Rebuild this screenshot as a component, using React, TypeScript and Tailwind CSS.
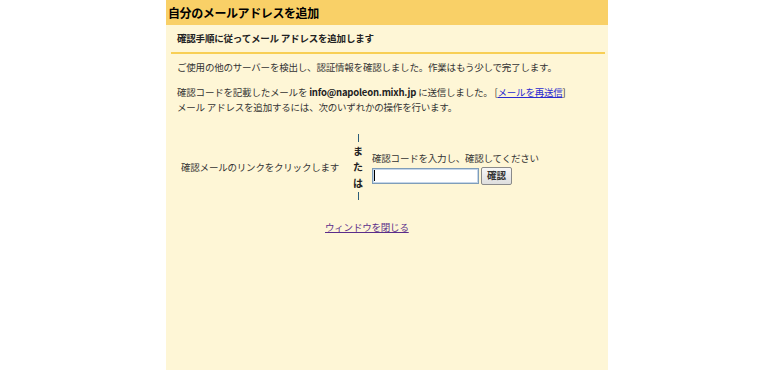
import React from "react";

export default function App() {
  const font = { fontFamily: '"Noto Sans CJK JP", "Noto Sans", sans-serif' };
  return (
    <div className="w-[774px] h-[370px] bg-white flex" style={font}>
      <div className="ml-[166px] w-[442px] h-[370px] bg-[#fef6d6] flex flex-col">
        <div className="h-[25px] bg-[#f9d067] flex items-center pl-[2px]">
          <span className="text-[12px] font-bold text-black tracking-[-0.4px]">自分のメールアドレスを追加</span>
        </div>
        <div className="h-[27px] flex items-center pl-[11px]">
          <span className="text-[9.5px] font-bold text-[#222] tracking-[-0.2px]">確認手順に従ってメール アドレスを追加します</span>
        </div>
        <div className="mx-[5px] mr-[3px] h-[2px] bg-[#f8cf55]" />
        <div className="pl-[11px] pt-[6px] text-[9.5px] text-[#333] leading-[15px] tracking-[-0.2px]">
          <p>ご使用の他のサーバーを検出し、認証情報を確認しました。作業はもう少しで完了します。</p>
          <p className="mt-[10px]">
            確認コードを記載したメールを <b className="text-[#222]">info@napoleon.mixh.jp</b> に送信しました。 [
            <span className="text-[#2a2ad0] underline">メールを再送信</span>]
          </p>
          <p>メール アドレスを追加するには、次のいずれかの操作を行います。</p>
        </div>
        <div className="flex items-center mt-[18px]">
          <div className="w-[182px] pl-[15px] text-[9.5px] text-[#333] tracking-[-0.2px]">確認メールのリンクをクリックします</div>
          <div className="w-[20px] flex flex-col items-center text-[10px] font-bold text-[#222] leading-[16px]">
            <div className="w-[1px] h-[8px] my-[1px] bg-[#2c5e7a]" />
            <span>ま</span>
            <span>た</span>
            <span>は</span>
            <div className="w-[1px] h-[8px] my-[1px] bg-[#2c5e7a]" />
          </div>
          <div className="flex flex-col pl-[4px] pt-[1px]">
            <span className="text-[9.5px] text-[#333] tracking-[-0.2px] leading-[14px]">確認コードを入力し、確認してください</span>
            <div className="flex items-center gap-[2px] mt-[2px]">
              <div className="w-[107px] h-[16px] bg-white border border-[#7f9db9] shadow-[inset_0_0_0_1px_#c5d6ea] flex items-center pl-[1px]">
                <div className="w-[1px] h-[11px] bg-black" />
              </div>
              <div className="w-[31px] h-[18px] bg-gradient-to-b from-[#f7f7f7] to-[#dedede] border border-[#8a8a8a] rounded-[2px] flex items-center justify-center text-[9.5px] font-bold text-[#333]">確認</div>
            </div>
          </div>
        </div>
        <div className="mt-[19px] pl-[159px] text-[9.5px] tracking-[-0.2px]">
          <span className="text-[#5a2d8a] underline">ウィンドウを閉じる</span>
        </div>
      </div>
    </div>
  );
}
